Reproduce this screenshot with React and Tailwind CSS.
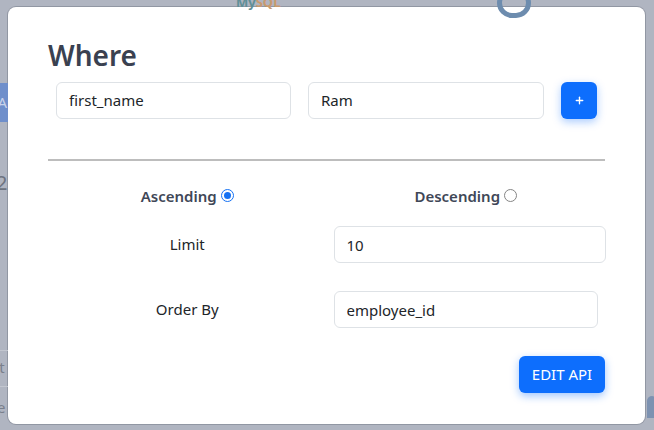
import { Plus } from 'lucide-react'

function Field({ value, className = '' }) {
  return (
    <input
      readOnly
      value={value}
      className={`h-[37px] rounded-[6px] border border-[#dee2e6] bg-white px-3 text-[15px] text-[#212529] outline-none ${className}`}
    />
  )
}

function Radio({ checked }) {
  if (checked) {
    return (
      <span className="ml-[4px] inline-flex h-[13px] w-[13px] items-center justify-center rounded-full border-[1.5px] border-[#1672f3] bg-white">
        <span className="h-[7px] w-[7px] rounded-full bg-[#1672f3]" />
      </span>
    )
  }
  return <span className="ml-[4px] inline-block h-[13px] w-[13px] rounded-full border border-[#858585] bg-white" />
}

export default function App() {
  return (
    <div className="relative h-[430px] w-[654px] overflow-hidden bg-[#b0b5c1] font-['Noto_Sans',sans-serif]">
      {/* faded page behind the overlay */}
      <div className="absolute left-[236px] top-[-7px] text-[13px] font-bold text-[#5f8f96]">
        My<span className="text-[#c99a6e]">SQL</span>
      </div>
      <div className="absolute left-[497px] top-[-12px] h-[30px] w-[34px] rounded-full border-[5px] border-[#6d8cae]" />
      <div className="absolute left-[-30px] top-[83px] flex h-[39px] w-[38px] items-center justify-end bg-[#6f8fcb] pr-[1px] text-[15px] text-[#c8d3ea]">
        A
      </div>
      <div className="absolute left-[-4px] top-[168px] text-[20px] text-[#6d7380]">2</div>
      <div className="absolute left-0 top-[350px] h-px w-[8px] bg-[#c2c6cf]" />
      <div className="absolute left-[-8px] top-[356px] text-[15px] text-[#7a808c]">ct</div>
      <div className="absolute left-0 top-[386px] h-px w-[8px] bg-[#c2c6cf]" />
      <div className="absolute left-[-3px] top-[396px] text-[15px] text-[#7a808c]">e</div>
      <div className="absolute left-[647px] top-[396px] h-[22px] w-[10px] rounded-t-full bg-[#7d92b1]" />

      <div className="ml-[8px] mt-[7px] flex h-[417px] w-[637px] flex-col rounded-[8px] bg-white px-[40px] pt-[32px] shadow-[0_0_0_1px_rgba(90,95,110,0.35)]">
        <h2 className="text-[28px] font-semibold leading-[1.2] text-[#3a4150]">Where</h2>

        <div className="mt-[9px] ml-[8px] flex items-center gap-[17px]">
          <Field value="first_name" className="w-[235px]" />
          <Field value="Ram" className="w-[236px]" />
          <button className="flex h-[37px] w-[36px] items-center justify-center rounded-[6px] bg-[#0d6efd] text-white shadow-[0_3px_8px_rgba(13,110,253,0.35)]">
            <Plus size={11} strokeWidth={3} />
          </button>
        </div>

        <div className="mt-[40px] h-[2px] w-full bg-[#bdbdbd]" />

        <div className="mt-[24px] grid grid-cols-2 text-[15px] font-semibold text-[#404757]">
          <div className="flex items-center justify-center">
            Ascending
            <Radio checked />
          </div>
          <div className="flex items-center justify-center">
            Descending
            <Radio />
          </div>
        </div>

        <div className="mt-[19px] grid grid-cols-2 items-center text-[15px] text-[#212529]">
          <div className="text-center">Limit</div>
          <Field value="10" className="ml-[7px] w-[272px]" />
        </div>

        <div className="mt-[28px] grid grid-cols-2 items-center text-[15px] text-[#212529]">
          <div className="text-center">Order By</div>
          <Field value="employee_id" className="ml-[7px] w-[264px]" />
        </div>

        <div className="mt-[28px] flex justify-end">
          <button className="h-[37px] w-[86px] rounded-[6px] bg-[#0d6efd] text-[15px] text-white shadow-[0_3px_8px_rgba(13,110,253,0.4)]">
            EDIT API
          </button>
        </div>
      </div>
    </div>
  )
}
